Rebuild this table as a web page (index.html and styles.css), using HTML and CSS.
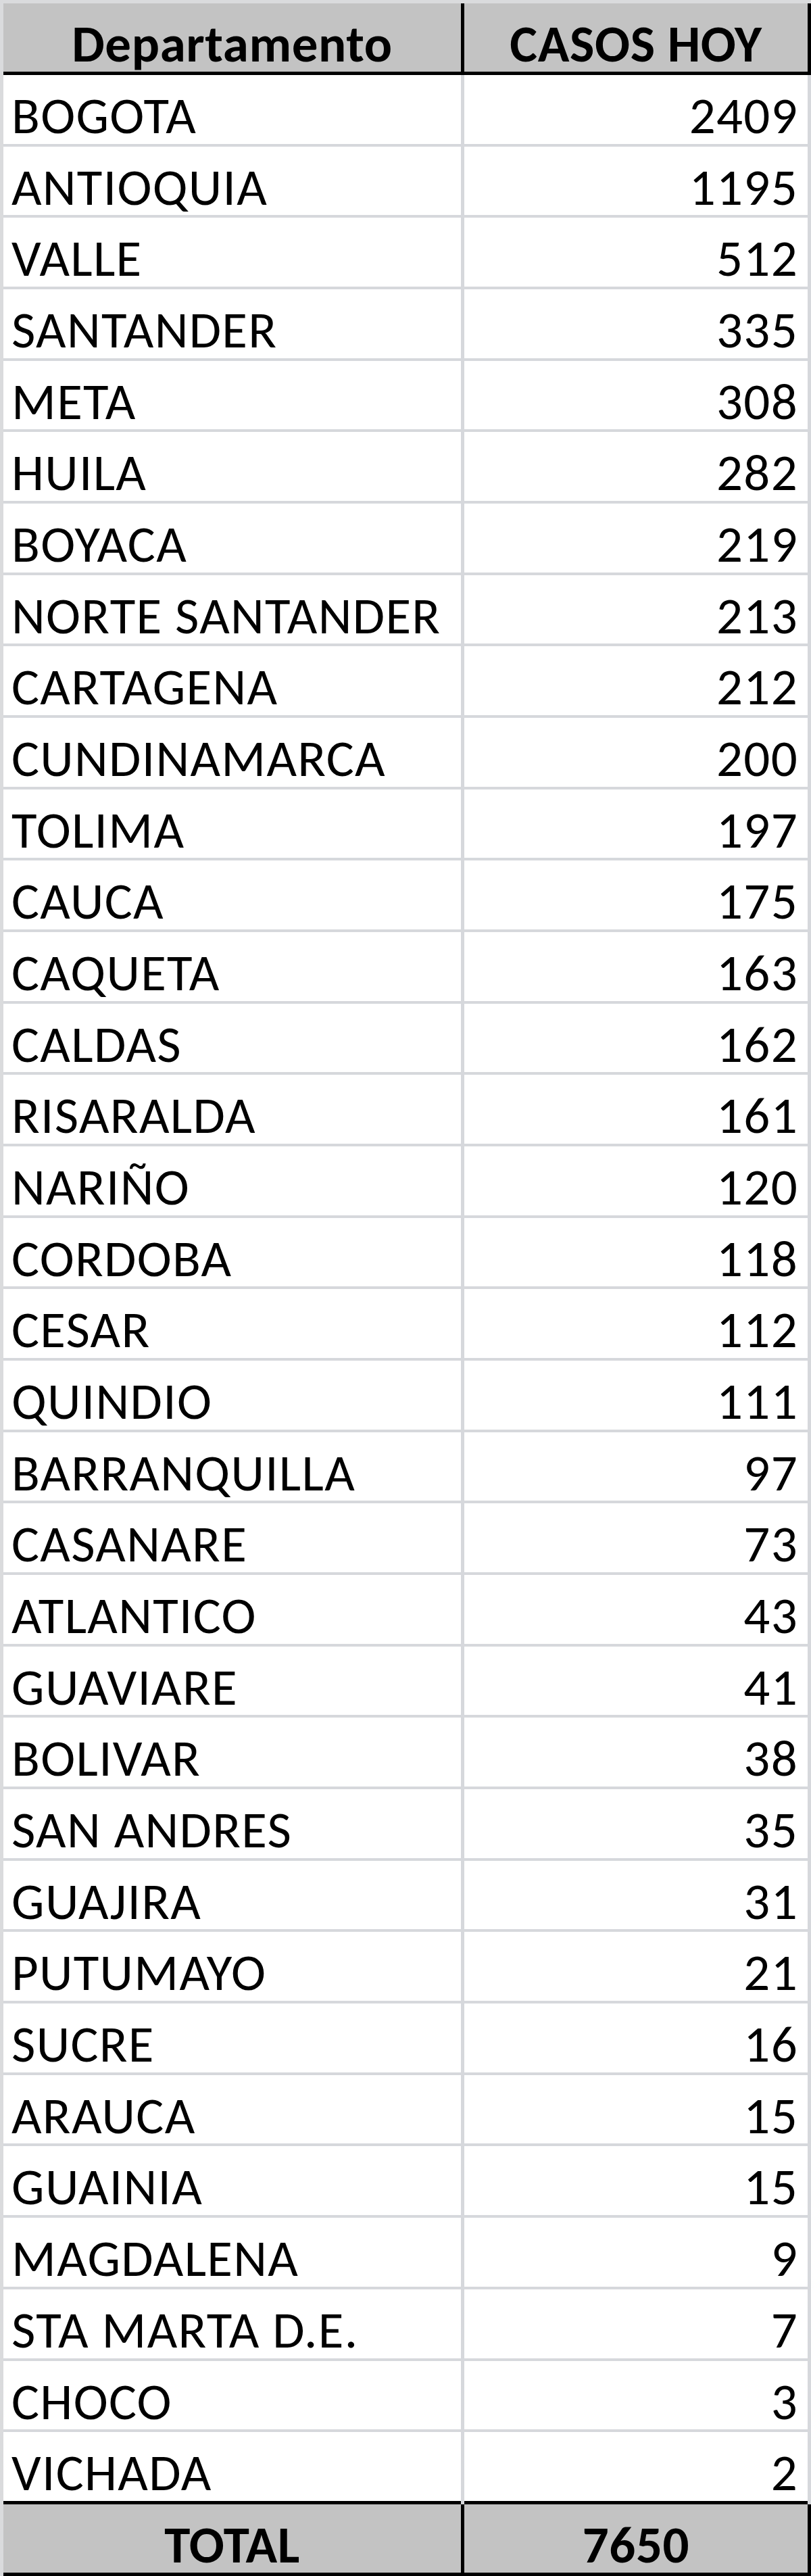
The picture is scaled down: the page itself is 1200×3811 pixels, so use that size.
FILE: index.html
```html
<!DOCTYPE html>
<html lang="es">
<head>
<meta charset="utf-8">
<title>Casos hoy por departamento</title>
<link rel="stylesheet" href="styles.css">
</head>
<body>
<div class="sheet">
  <div class="row head">
    <div class="cell name">Departamento</div>
    <div class="cell num">CASOS HOY</div>
  </div>
  <div class="row"><div class="cell name">BOGOTA</div><div class="cell num">2409</div></div>
  <div class="row"><div class="cell name">ANTIOQUIA</div><div class="cell num">1195</div></div>
  <div class="row"><div class="cell name">VALLE</div><div class="cell num">512</div></div>
  <div class="row"><div class="cell name">SANTANDER</div><div class="cell num">335</div></div>
  <div class="row"><div class="cell name">META</div><div class="cell num">308</div></div>
  <div class="row"><div class="cell name">HUILA</div><div class="cell num">282</div></div>
  <div class="row"><div class="cell name">BOYACA</div><div class="cell num">219</div></div>
  <div class="row"><div class="cell name">NORTE SANTANDER</div><div class="cell num">213</div></div>
  <div class="row"><div class="cell name">CARTAGENA</div><div class="cell num">212</div></div>
  <div class="row"><div class="cell name">CUNDINAMARCA</div><div class="cell num">200</div></div>
  <div class="row"><div class="cell name">TOLIMA</div><div class="cell num">197</div></div>
  <div class="row"><div class="cell name">CAUCA</div><div class="cell num">175</div></div>
  <div class="row"><div class="cell name">CAQUETA</div><div class="cell num">163</div></div>
  <div class="row"><div class="cell name">CALDAS</div><div class="cell num">162</div></div>
  <div class="row"><div class="cell name">RISARALDA</div><div class="cell num">161</div></div>
  <div class="row"><div class="cell name">NARIÑO</div><div class="cell num">120</div></div>
  <div class="row"><div class="cell name">CORDOBA</div><div class="cell num">118</div></div>
  <div class="row"><div class="cell name">CESAR</div><div class="cell num">112</div></div>
  <div class="row"><div class="cell name">QUINDIO</div><div class="cell num">111</div></div>
  <div class="row"><div class="cell name">BARRANQUILLA</div><div class="cell num">97</div></div>
  <div class="row"><div class="cell name">CASANARE</div><div class="cell num">73</div></div>
  <div class="row"><div class="cell name">ATLANTICO</div><div class="cell num">43</div></div>
  <div class="row"><div class="cell name">GUAVIARE</div><div class="cell num">41</div></div>
  <div class="row"><div class="cell name">BOLIVAR</div><div class="cell num">38</div></div>
  <div class="row"><div class="cell name">SAN ANDRES</div><div class="cell num">35</div></div>
  <div class="row"><div class="cell name">GUAJIRA</div><div class="cell num">31</div></div>
  <div class="row"><div class="cell name">PUTUMAYO</div><div class="cell num">21</div></div>
  <div class="row"><div class="cell name">SUCRE</div><div class="cell num">16</div></div>
  <div class="row"><div class="cell name">ARAUCA</div><div class="cell num">15</div></div>
  <div class="row"><div class="cell name">GUAINIA</div><div class="cell num">15</div></div>
  <div class="row"><div class="cell name">MAGDALENA</div><div class="cell num">9</div></div>
  <div class="row"><div class="cell name">STA MARTA D.E.</div><div class="cell num">7</div></div>
  <div class="row"><div class="cell name">CHOCO</div><div class="cell num">3</div></div>
  <div class="row last"><div class="cell name">VICHADA</div><div class="cell num">2</div></div>
  <div class="row total">
    <div class="cell name">TOTAL</div>
    <div class="cell num">7650</div>
  </div>
</div>
</body>
</html>
```

FILE: styles.css
```css
html, body {
  margin: 0;
  padding: 0;
}

body {
  background: #dadbdd;
  font-family: Carlito, Calibri, Lato, "Liberation Sans", sans-serif;
  font-size: 77px;
  color: #000;
}

.sheet {
  margin: 5px 0 0 5px;
  width: 1195px;
  background: #fff;
}

.row {
  display: grid;
  grid-template-columns: 682px 513px;
  height: 105.68px;
  box-sizing: border-box;
  border-bottom: 4px solid #d6d8dc;
}

.row.last {
  height: 101.68px;
  border-bottom: none;
}

.cell {
  box-sizing: border-box;
  line-height: 1.2;
  padding-top: 14px;
  letter-spacing: 1.3px;
  white-space: nowrap;
}

.name {
  padding-left: 12px;
  border-right: 5px solid #d6d8dc;
}

.num {
  text-align: right;
  padding-right: 14px;
  border-right: 5px solid #d6d8dc;
}

.head,
.total {
  background: #c3c3c3;
  font-weight: bold;
}

.head {
  height: 106px;
  border-bottom: 5px solid #000;
}

.total {
  height: 111px;
  border-top: 5px solid #000;
  border-bottom: 5px solid #000;
}

.head .cell,
.total .cell {
  text-align: center;
  padding-left: 0;
  padding-right: 0;
  letter-spacing: 0.6px;
  border-right-color: #000;
}
```
